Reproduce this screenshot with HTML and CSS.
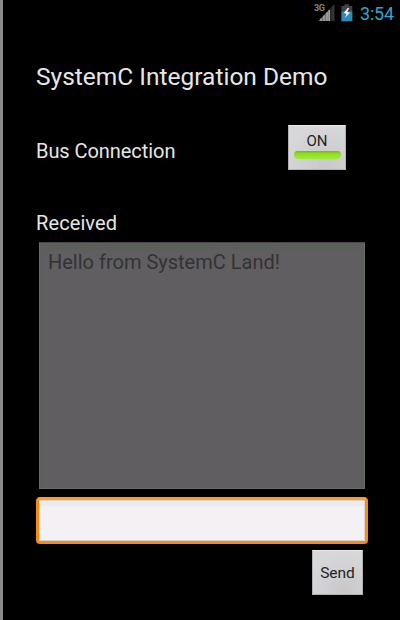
FILE: index.html
```html
<!DOCTYPE html>
<html lang="en">
<head>
<meta charset="utf-8">
<title>SystemC Integration Demo</title>
<link rel="stylesheet" href="styles.css">
</head>
<body>
<div class="screen">
  <header class="status">
    <svg class="signal" width="22" height="19" viewBox="0 0 22 19">
      <path d="M21.5 1V18H5.5Z" fill="#353535"/>
      <path d="M16.7 6.2V18H5.5Z" fill="#747474"/>
      <path d="M8 15.5V18M11 12.5V18M14 9.5V18M16.3 7V18" stroke="#a9a9a9" stroke-width="1.3"/>
      <path d="M18 4.5V18" stroke="#111" stroke-width="0.8"/>
      <text class="network" x="1" y="8.3">3G</text>
    </svg>
    <svg class="battery" width="12" height="18" viewBox="0 0 12 18">
      <path d="M3.5 0.3H8V2H11.3V17.2H0.5V2H3.5Z" fill="#414447"/>
      <path d="M0.5 7.5H11.3V17.2H0.5Z" fill="#2b8db5"/>
      <path d="M6.7 4L2.8 8.8L5.5 10L3.8 14L9 8.8L6.3 7.8L8.2 4Z" fill="#eaf2f5"/>
    </svg>
    <time class="clock">3:54</time>
  </header>
  <main class="content">
    <h1 class="title">SystemC Integration Demo</h1>
    <div class="connection">
      <span class="label bus">Bus Connection</span>
      <button class="toggle">ON<span class="indicator"></span></button>
    </div>
    <div class="label received">Received</div>
    <div class="log"><div class="message">Hello from SystemC Land!</div></div>
    <input class="entry" type="text" aria-label="Message">
    <button class="send">Send</button>
  </main>
</div>
</body>
</html>
```
FILE: styles.css
```css
* { box-sizing: border-box; }
body { margin: 0; background: #000; font-family: Roboto, sans-serif; color: #e6e6e6; }
.screen { width: 400px; height: 620px; overflow: hidden; border-left: 3px solid #8b8b8b; background: #000; }
.status { height: 28px; display: flex; align-items: flex-start; padding: 3px 6px 0 0; justify-content: flex-end; }
.signal { margin-right: 6px; overflow: visible; }
.network { font: 700 9px Roboto, sans-serif; fill: #858585; letter-spacing: -0.3px; }
.battery { margin: 1px 7px 0 0; }
.clock { width: 34px; font-size: 18px; line-height: 21px; letter-spacing: -0.2px; color: #32a5d2; white-space: nowrap; }
.content { display: flex; flex-direction: column; padding: 34px 0 0 33px; }
.title { margin: 0; font-size: 24.5px; font-weight: 400; line-height: 30px; white-space: nowrap; }
.connection { display: flex; justify-content: space-between; align-items: center; width: 310px; height: 45px; margin-top: 33px; }
.label { font-size: 20px; line-height: 24px; }
.bus { margin-top: 7px; letter-spacing: -0.06px; }
.toggle, .send { font-family: Roboto, sans-serif; color: #242424; padding: 0; border: 1px solid #b2b2b5; border-top-color: #ececef; background: radial-gradient(circle at 65% 95%, #c8c8ca, #d7d7d9 75%); }
.toggle { display: flex; flex-direction: column; align-items: center; width: 58px; height: 45px; font-size: 15px; line-height: 18px; padding-top: 6px; }
.indicator { width: 47px; height: 8px; margin-top: 1px; border-radius: 4px 4px 5px 5px; background: linear-gradient(#72b51b, #91df20 35%, #9ced36); }
.received { margin-top: 41px; letter-spacing: 0.1px; }
.log { width: 326px; height: 247px; margin: 7px 0 0 3px; padding: 8px 4px 0; border: 1px solid #696a69; border-top-color: #494a49; background: #5c5f5b; }
.message { height: 237px; padding-left: 4px; border-radius: 2px 2px 0 0; background: #605e61; color: #333; font-size: 20px; line-height: 23px; white-space: nowrap; }
.entry { width: 332px; height: 47px; margin-top: 8px; padding: 0 10px; border: 3px solid #f98b14; border-top-color: #ff9b29; border-radius: 4px; outline: none; background: #f3f1f4; box-shadow: inset 0 0 0 1px #d8d5d0, inset 0 6px 0 #ebebed; font: 20px Roboto, sans-serif; }
.send { width: 51px; height: 45px; margin: 6px 0 0 276px; font-size: 15.5px; }
```
